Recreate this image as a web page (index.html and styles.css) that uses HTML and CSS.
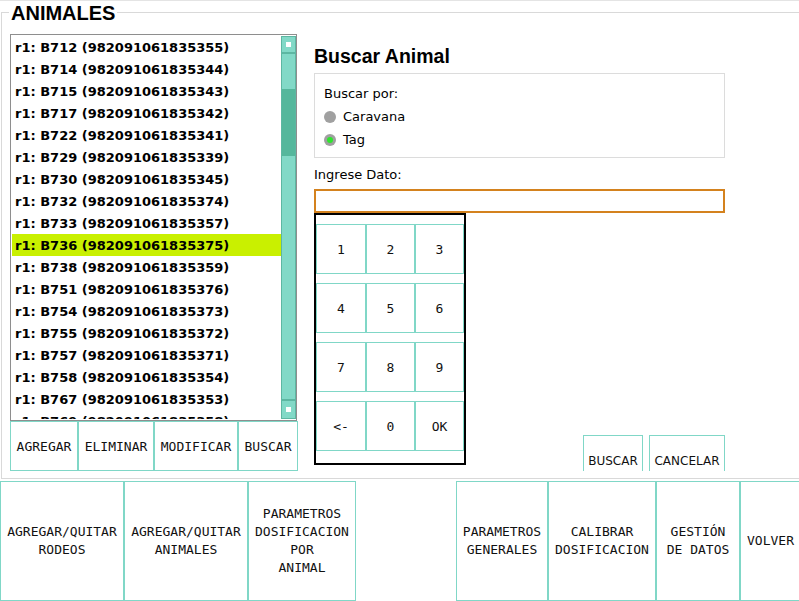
FILE: index.html
```html
<!DOCTYPE html>
<html lang="es">
<head>
<meta charset="utf-8">
<title>Animales</title>
<link rel="stylesheet" href="styles.css">
</head>
<body>
<div class="topline"></div>
<section class="group">
  <h1 class="group-title">ANIMALES</h1>
  <div class="left">
    <div class="listbox">
      <ul class="rows">
        <li>r1: B712 (982091061835355)</li>
        <li>r1: B714 (982091061835344)</li>
        <li>r1: B715 (982091061835343)</li>
        <li>r1: B717 (982091061835342)</li>
        <li>r1: B722 (982091061835341)</li>
        <li>r1: B729 (982091061835339)</li>
        <li>r1: B730 (982091061835345)</li>
        <li>r1: B732 (982091061835374)</li>
        <li>r1: B733 (982091061835357)</li>
        <li class="selected">r1: B736 (982091061835375)</li>
        <li>r1: B738 (982091061835359)</li>
        <li>r1: B751 (982091061835376)</li>
        <li>r1: B754 (982091061835373)</li>
        <li>r1: B755 (982091061835372)</li>
        <li>r1: B757 (982091061835371)</li>
        <li>r1: B758 (982091061835354)</li>
        <li>r1: B767 (982091061835353)</li>
        <li>r1: B769 (982091061835358)</li>
      </ul>
      <div class="scrollbar">
        <div class="sb-btn sb-up"><span class="sb-sq"></span></div>
        <div class="sb-track"><div class="sb-thumb"></div></div>
        <div class="sb-btn sb-down"><span class="sb-sq"></span></div>
      </div>
    </div>
    <div class="list-actions">
      <button class="btn la-1">AGREGAR</button>
      <button class="btn la-2">ELIMINAR</button>
      <button class="btn la-3">MODIFICAR</button>
      <button class="btn la-4">BUSCAR</button>
    </div>
  </div>

  <div class="search">
    <h2 class="search-title">Buscar Animal</h2>
    <div class="options">
      <div class="opt-line">Buscar por:</div>
      <div class="opt-line"><span class="radio"></span>Caravana</div>
      <div class="opt-line"><span class="radio on"></span>Tag</div>
    </div>
    <div class="field-label">Ingrese Dato:</div>
    <div class="input"></div>
    <div class="pad-row">
      <div class="keypad">
        <button class="key">1</button>
        <button class="key">2</button>
        <button class="key">3</button>
        <button class="key">4</button>
        <button class="key">5</button>
        <button class="key">6</button>
        <button class="key">7</button>
        <button class="key">8</button>
        <button class="key">9</button>
        <button class="key">&lt;-</button>
        <button class="key">0</button>
        <button class="key">OK</button>
      </div>
      <div class="actions">
        <button class="act act-buscar">BUSCAR</button>
        <button class="act act-cancelar">CANCELAR</button>
      </div>
    </div>
  </div>
</section>

<nav class="bottom">
  <button class="nb nb-1">AGREGAR/QUITAR
RODEOS</button>
  <button class="nb nb-2">AGREGAR/QUITAR
ANIMALES</button>
  <button class="nb nb-3">PARAMETROS
DOSIFICACION
POR
ANIMAL</button>
  <div class="spacer"></div>
  <button class="nb nb-4">PARAMETROS
GENERALES</button>
  <button class="nb nb-5">CALIBRAR
DOSIFICACION</button>
  <button class="nb nb-6">GESTIÓN
DE DATOS</button>
  <button class="nb nb-7">VOLVER</button>
</nav>
</body>
</html>
```

FILE: styles.css
```css
html, body {
  margin: 0;
  padding: 0;
  background: #ffffff;
  overflow: hidden;
}

body {
  width: 799px;
  height: 601px;
  font-family: "DejaVu Sans", sans-serif;
  color: #000;
}

.topline {
  height: 1px;
  background: #e4e4e4;
}

/* ---------- group box ---------- */
.group {
  position: relative;
  box-sizing: border-box;
  margin: 11px 0 0 1px;
  width: 830px;
  height: 467px;
  border: 1px solid #d9d9d9;
  border-right: none;
  padding: 21px 0 0 8px;
  display: flex;
  align-items: flex-start;
}

.group-title {
  position: absolute;
  top: -11px;
  left: 7px;
  margin: 0;
  padding: 0 2px;
  background: #fff;
  font-family: "Liberation Sans", Arial, sans-serif;
  font-weight: bold;
  font-size: 20px;
  line-height: 22px;
  color: #000;
}

/* ---------- left column ---------- */
.left {
  width: 288px;
  flex: none;
  display: flex;
  flex-direction: column;
}

.listbox {
  box-sizing: border-box;
  width: 287px;
  height: 387px;
  flex: none;
  border: 1px solid #8e8e8e;
  padding: 1px 0 1px 1px;
  display: flex;
  overflow: hidden;
}

.rows {
  list-style: none;
  margin: 0;
  padding: 0;
  flex: 1;
  overflow: hidden;
}

.rows li {
  height: 22px;
  line-height: 23px;
  padding-left: 3px;
  font-weight: bold;
  font-size: 13px;
  white-space: nowrap;
}

.rows li.selected {
  background: #c9f000;
}

.scrollbar {
  width: 15px;
  flex: none;
  box-sizing: border-box;
  border: 1px solid #5db7a2;
  background: #82d9c7;
  display: flex;
  flex-direction: column;
}

.sb-btn {
  height: 15px;
  display: flex;
  align-items: center;
  justify-content: center;
  flex: none;
}

.sb-up {
  border-bottom: 2px solid #5db7a2;
}

.sb-down {
  height: 17px;
  border-top: 2px solid #5db7a2;
}

.sb-sq {
  width: 5px;
  height: 5px;
  background: #fff;
}

.sb-track {
  flex: 1;
  padding-top: 35px;
}

.sb-thumb {
  height: 67px;
  background: #55b79c;
}

.list-actions {
  display: flex;
  height: 50px;
  flex: none;
}

.btn {
  box-sizing: border-box;
  height: 50px;
  margin: 0;
  padding: 0;
  background: #fff;
  border: 1px solid #80d7c7;
  font-family: "DejaVu Sans Mono", monospace;
  font-size: 13px;
  color: #111;
  flex: none;
}

.la-1 { width: 68px; }
.la-2 { width: 76px; }
.la-3 { width: 84px; }
.la-4 { width: 60px; }

/* ---------- search panel ---------- */
.search {
  width: 411px;
  height: 437px;
  flex: none;
  margin-left: 16px;
  overflow: hidden;
  display: flex;
  flex-direction: column;
}

.search > * {
  flex: none;
}

.search-title {
  margin: 12px 0 0 0;
  font-family: "Liberation Sans", Arial, sans-serif;
  font-size: 19.5px;
  line-height: 21px;
  font-weight: bold;
}

.options {
  box-sizing: border-box;
  margin-top: 6px;
  height: 85px;
  border: 1px solid #dcdcdc;
  padding: 8px 0 0 9px;
}

.opt-line {
  height: 23px;
  line-height: 23px;
  font-size: 13px;
  display: flex;
  align-items: center;
}

.radio {
  box-sizing: border-box;
  width: 12px;
  height: 12px;
  border-radius: 50%;
  background: #a0a0a0;
  margin-right: 7px;
  display: flex;
  align-items: center;
  justify-content: center;
}

.radio.on::after {
  content: "";
  width: 6px;
  height: 6px;
  border-radius: 50%;
  background: #2ee62e;
}

.field-label {
  margin-top: 8px;
  font-size: 13px;
  line-height: 18px;
}

.input {
  box-sizing: border-box;
  margin-top: 5px;
  height: 24px;
  border: 2px solid #d4821e;
}

.pad-row {
  display: flex;
  justify-content: space-between;
  align-items: flex-start;
}

.keypad {
  box-sizing: border-box;
  width: 152px;
  height: 252px;
  flex: none;
  border: 2px solid #000;
  padding-top: 9px;
  display: grid;
  grid-template-columns: 50px 49px 49px;
  grid-auto-rows: 50px;
  row-gap: 9px;
  align-content: start;
}

.key {
  box-sizing: border-box;
  margin: 0;
  padding: 0;
  background: #fff;
  border: 1px solid #80d7c7;
  font-family: "DejaVu Sans Mono", monospace;
  font-size: 13px;
  color: #111;
}

.actions {
  display: flex;
  gap: 6px;
  padding-top: 222px;
}

.act {
  box-sizing: border-box;
  height: 50px;
  margin: 0;
  padding: 2px 0 0 0;
  background: #fff;
  border: 1px solid #80d7c7;
  font-family: "DejaVu Sans", sans-serif;
  font-size: 12px;
  color: #111;
  flex: none;
}

.act-buscar { width: 60px; }
.act-cancelar { width: 76px; }

/* ---------- bottom nav ---------- */
.bottom {
  display: flex;
  margin-top: 2px;
  height: 120px;
  width: 801px;
}

.nb {
  box-sizing: border-box;
  height: 120px;
  margin: 0;
  padding: 0;
  background: #fff;
  border: 1px solid #80d7c7;
  font-family: "DejaVu Sans Mono", monospace;
  font-size: 13px;
  line-height: 18px;
  color: #111;
  white-space: pre;
  text-align: center;
  flex: none;
}

.spacer { width: 100px; flex: none; }
.nb-1 { width: 124px; }
.nb-2 { width: 124px; }
.nb-3 { width: 108px; }
.nb-4 { width: 92px; }
.nb-5 { width: 108px; }
.nb-6 { width: 84px; }
.nb-7 { width: 61px; }
```
